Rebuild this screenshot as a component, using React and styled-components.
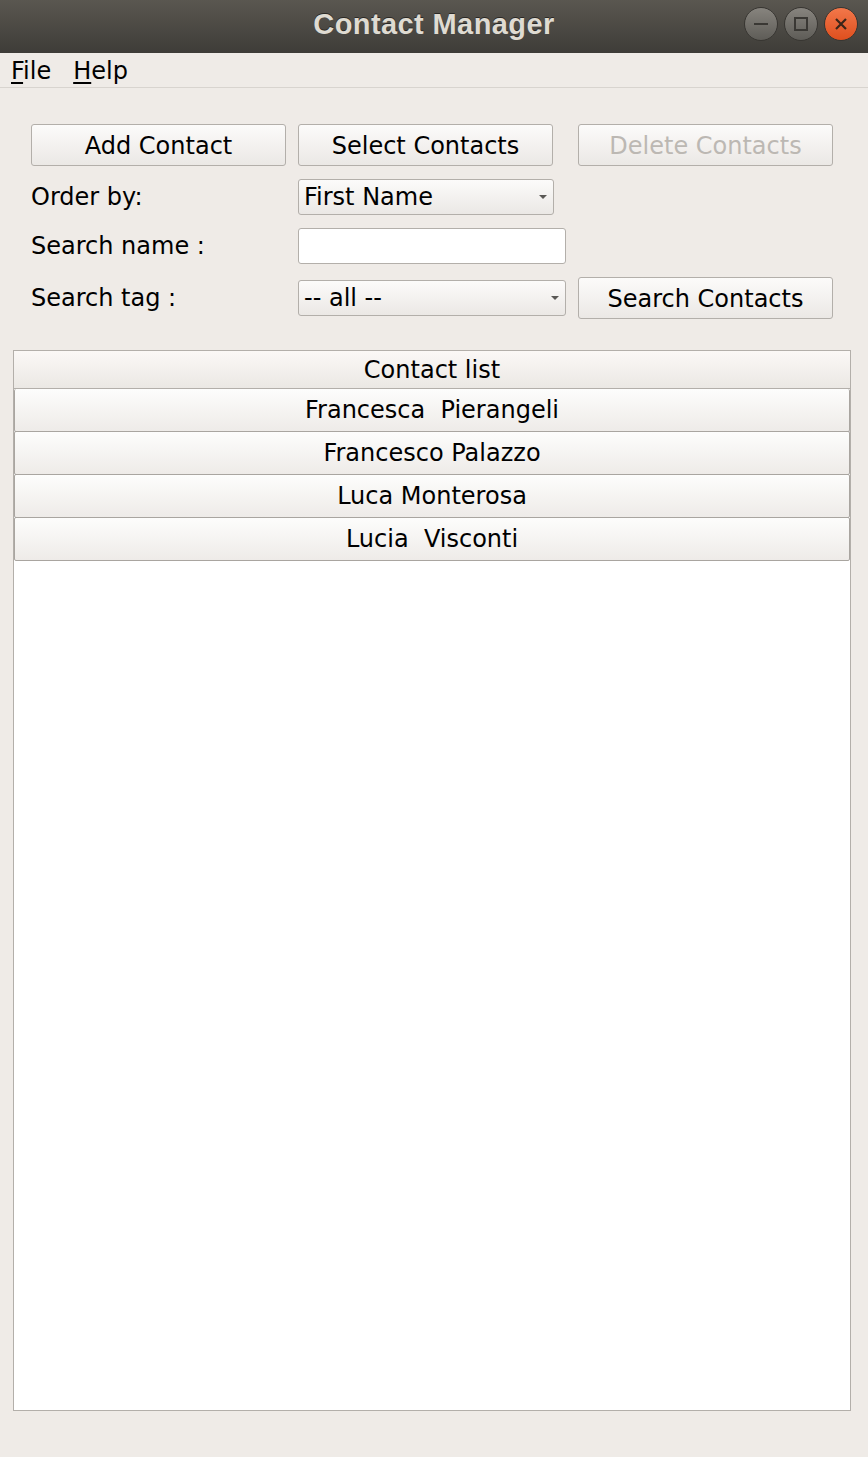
import styled, { createGlobalStyle } from "styled-components";

const GlobalStyle = createGlobalStyle`
  html, body {
    margin: 0;
    padding: 0;
    background: #efebe7;
  }
  * {
    box-sizing: border-box;
  }
`;

const Window = styled.div`
  width: 868px;
  height: 1457px;
  display: flex;
  flex-direction: column;
  background: #efebe7;
  font-family: "DejaVu Sans", sans-serif;
  font-size: 24px;
  color: #000;
  overflow: hidden;
`;

const TitleBar = styled.div`
  position: relative;
  height: 53px;
  flex-shrink: 0;
  display: flex;
  align-items: center;
  justify-content: center;
  background: linear-gradient(#5a5750, #3e3c38);
`;

const Title = styled.div`
  font-family: "Liberation Sans", sans-serif;
  font-weight: bold;
  font-size: 29px;
  letter-spacing: 0.4px;
  color: #dfdbd2;
  text-shadow: 0 -1px 0 #2a2825;
  margin-bottom: 4px;
`;

const WindowControls = styled.div`
  position: absolute;
  right: 10px;
  top: 7px;
  display: flex;
  gap: 6px;
`;

const CircleButton = styled.div`
  width: 34px;
  height: 34px;
  border-radius: 50%;
  border: 1px solid #383632;
  display: flex;
  align-items: center;
  justify-content: center;
  background: ${(p) =>
    p.close
      ? "linear-gradient(#f2774a, #de4f1e)"
      : "linear-gradient(#87847e, #5e5c57)"};
`;

const MenuBar = styled.div`
  height: 35px;
  flex-shrink: 0;
  display: flex;
  align-items: center;
  gap: 22px;
  padding-left: 11px;
  border-bottom: 1px solid #d8d4cf;
`;

const MenuItem = styled.span`
  line-height: 1;
  padding-top: 2px;
`;

const Mnemonic = styled.span`
  text-decoration: underline;
  text-underline-offset: 3px;
  text-decoration-thickness: 2px;
`;

const Content = styled.div`
  flex: 1;
  display: flex;
  flex-direction: column;
  padding: 36px 17px 46px 13px;
`;

const FormGrid = styled.div`
  display: grid;
  grid-template-columns: 267px 280px 255px;
  grid-template-rows: 42px 36px 36px 42px;
  row-gap: 13px;
  align-items: center;
  margin-left: 18px;
  margin-bottom: 31px;
`;

const Button = styled.button`
  width: 255px;
  height: 42px;
  font-family: "DejaVu Sans", sans-serif;
  font-size: 24px;
  color: ${(p) => (p.disabled ? "#bcb8b3" : "#000")};
  background: linear-gradient(#fcfbfa, #ebe8e5);
  border: 1px solid #b3afaa;
  border-radius: 3px;
  padding: 1px 0 0;
`;

const Label = styled.div`
  line-height: 1;
`;

const Combo = styled.div`
  width: ${(p) => p.width}px;
  height: 36px;
  display: flex;
  align-items: center;
  justify-content: space-between;
  padding: 0 5px;
  background: linear-gradient(#fcfbfa, #ebe8e5);
  border: 1px solid #b3afaa;
  border-radius: 3px;
`;

const Arrow = styled.span`
  width: 0;
  height: 0;
  border-left: 4px solid transparent;
  border-right: 4px solid transparent;
  border-top: 4px solid #5a5855;
  margin-right: 1px;
`;

const TextInput = styled.div`
  width: 268px;
  height: 36px;
  background: #fff;
  border: 1px solid #b3afaa;
  border-radius: 3px;
`;

const Table = styled.div`
  flex: 1;
  display: flex;
  flex-direction: column;
  background: #fff;
  border: 1px solid #b3afaa;
`;

const HeaderCell = styled.div`
  height: 38px;
  flex-shrink: 0;
  display: flex;
  align-items: center;
  justify-content: center;
  background: linear-gradient(#fbf8f6, #ebe8e4);
  border-bottom: 1px solid #b3afaa;
`;

const Row = styled.div`
  height: ${(p) => (p.first ? 43 : 44)}px;
  flex-shrink: 0;
  display: flex;
  align-items: center;
  justify-content: center;
  background: linear-gradient(#fdfdfc, #eeebe8);
  border: 1px solid #a9a5a0;
  border-top-width: ${(p) => (p.first ? 0 : 1)}px;
  border-radius: 2px;
  margin-top: ${(p) => (p.first ? 0 : -1)}px;
  white-space: pre;
`;

const contacts = [
  "Francesca  Pierangeli",
  "Francesco Palazzo",
  "Luca Monterosa",
  "Lucia  Visconti",
];

const App = () => {
  return (
    <>
      <GlobalStyle />
      <Window>
        <TitleBar>
          <Title>Contact Manager</Title>
          <WindowControls>
            <CircleButton>
              <svg width="16" height="16" viewBox="0 0 16 16">
                <rect x="1" y="7" width="14" height="2" fill="#3a3834" />
              </svg>
            </CircleButton>
            <CircleButton>
              <svg width="16" height="16" viewBox="0 0 16 16">
                <rect x="2" y="2" width="12" height="12" fill="none" stroke="#3a3834" strokeWidth="2" />
              </svg>
            </CircleButton>
            <CircleButton close>
              <svg width="16" height="16" viewBox="0 0 16 16">
                <path d="M3 3 L13 13 M13 3 L3 13" stroke="#3b2519" strokeWidth="2.2" />
              </svg>
            </CircleButton>
          </WindowControls>
        </TitleBar>
        <MenuBar>
          <MenuItem>
            <Mnemonic>F</Mnemonic>ile
          </MenuItem>
          <MenuItem>
            <Mnemonic>H</Mnemonic>elp
          </MenuItem>
        </MenuBar>
        <Content>
          <FormGrid>
            <Button>Add Contact</Button>
            <Button>Select Contacts</Button>
            <Button disabled>Delete Contacts</Button>

            <Label>Order by:</Label>
            <Combo width={256}>
              First Name
              <Arrow />
            </Combo>
            <div />

            <Label>Search name :</Label>
            <TextInput />
            <div />

            <Label>Search tag :</Label>
            <Combo width={268}>
              -- all --
              <Arrow />
            </Combo>
            <Button>Search Contacts</Button>
          </FormGrid>
          <Table>
            <HeaderCell>Contact list</HeaderCell>
            {contacts.map((name, i) => (
              <Row key={name} first={i === 0}>
                {name}
              </Row>
            ))}
          </Table>
        </Content>
      </Window>
    </>
  );
};

export default App;
